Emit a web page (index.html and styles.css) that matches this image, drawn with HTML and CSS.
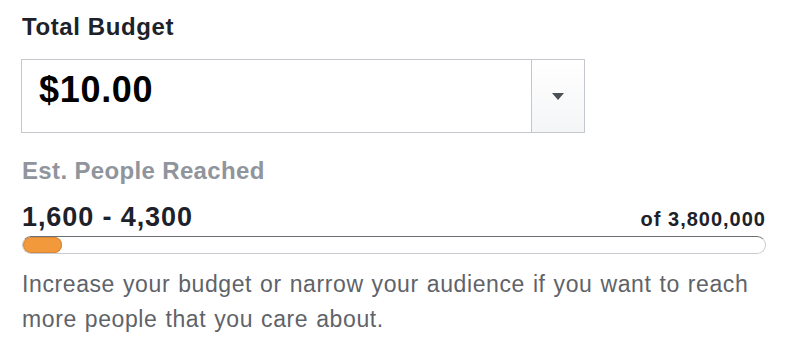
FILE: index.html
```html
<!DOCTYPE html>
<html lang="en">
<head>
    <meta charset="UTF-8">
    <meta name="viewport" content="width=device-width, initial-scale=1.0">
    <title>Total Budget</title>
    <link rel="stylesheet" href="styles.css">
</head>
<body>
    <section class="budget">
        <h3 class="budget-title">Total Budget</h3>

        <div class="budget-select">
            <div class="budget-value">$10.00</div>
            <button class="budget-toggle" aria-label="Choose budget">
                <svg width="12" height="7" viewBox="0 0 12 7"><path d="M0 0h12L6 7z" fill="#4b4f56"/></svg>
            </button>
        </div>

        <div class="reach">
            <div class="reach-label">Est. People Reached</div>
            <div class="reach-row">
                <span class="reach-range">1,600 - 4,300</span>
                <span class="reach-total">of 3,800,000</span>
            </div>
            <div class="reach-bar">
                <div class="reach-fill" style="width: 39px"></div>
            </div>
            <p class="reach-hint">Increase your budget or narrow your audience if you want to reach more people that you care about.</p>
        </div>
    </section>
</body>
</html>
```

FILE: styles.css
```css
body {
    font-family: "Liberation Sans", Arial, sans-serif;
    background: #fff;
    margin: 0;
    padding: 0;
}

.budget {
    padding: 13px 0 0 22px;
    width: 744px;
}

.budget-title {
    margin: 0;
    font-size: 24px;
    line-height: 28px;
    font-weight: bold;
    color: #1d2129;
    letter-spacing: 0.6px;
}

.budget-select {
    display: flex;
    width: 564px;
    height: 74px;
    margin: 18px 0 0 -1px;
    border: 1px solid #c4c7cc;
    box-sizing: border-box;
}

.budget-value {
    flex: 1;
    padding: 12px 0 0 17px;
    font-size: 36px;
    line-height: 36px;
    font-weight: bold;
    color: #000;
    letter-spacing: 0.7px;
}

.budget-toggle {
    width: 53px;
    border: none;
    border-left: 1px solid #c4c7cc;
    background: linear-gradient(#fff, #f4f5f7);
    display: flex;
    align-items: center;
    justify-content: center;
    padding: 0;
}

.reach {
    margin-top: 24px;
}

.reach-label {
    font-size: 24px;
    line-height: 28px;
    font-weight: bold;
    color: #90949c;
    letter-spacing: 0.35px;
}

.reach-row {
    display: flex;
    justify-content: space-between;
    align-items: baseline;
    margin-top: 17px;
    height: 30px;
}

.reach-range {
    font-size: 27px;
    line-height: 30px;
    font-weight: bold;
    color: #1d2129;
    letter-spacing: 0.9px;
}

.reach-total {
    font-size: 20px;
    font-weight: bold;
    color: #1d2129;
    letter-spacing: 1px;
}

.reach-bar {
    margin-top: 4px;
    height: 18px;
    border: 1px solid #c9ccd1;
    border-top-color: #6b6e73;
    border-radius: 9px;
    box-sizing: border-box;
    overflow: hidden;
}

.reach-fill {
    height: 100%;
    background: #f2993b;
    border-radius: 8px;
    box-shadow: inset 0 0 0 1px #d9863a;
}

.reach-hint {
    margin: 13px 0 0;
    font-size: 23px;
    line-height: 35px;
    color: #5f6369;
    letter-spacing: 0.6px;
    word-spacing: 1px;
}
```
